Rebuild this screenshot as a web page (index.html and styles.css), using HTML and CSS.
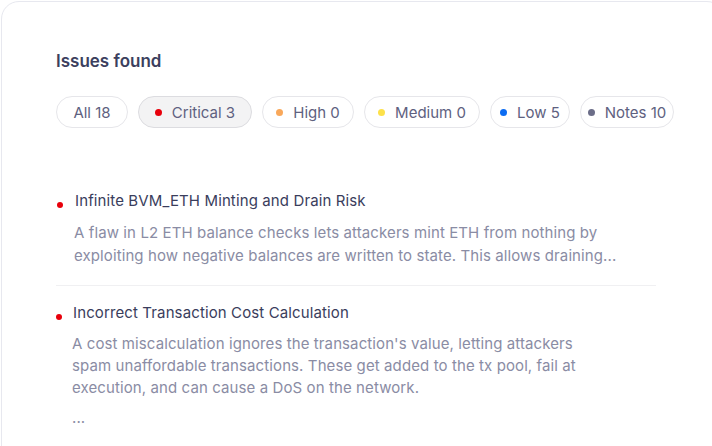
FILE: index.html
```html
<!DOCTYPE html>
<html lang="en">
<head>
<meta charset="utf-8">
<title>Issues found</title>
<link rel="stylesheet" href="styles.css">
</head>
<body>
<div class="card">
  <h2 class="title">Issues found</h2>
  <div class="filters">
    <button class="pill">All 18</button>
    <button class="pill active"><span class="dot critical"></span>Critical 3</button>
    <button class="pill"><span class="dot high"></span>High 0</button>
    <button class="pill"><span class="dot medium"></span>Medium 0</button>
    <button class="pill"><span class="dot low"></span>Low 5</button>
    <button class="pill"><span class="dot notes"></span>Notes 10</button>
  </div>
  <ul class="issues">
    <li class="issue">
      <div class="issue-head"><span class="bullet"></span><span class="issue-title">Infinite BVM_ETH Minting and Drain Risk</span></div>
      <p class="issue-desc">A flaw in L2 ETH balance checks lets attackers mint ETH from nothing by exploiting how negative balances are written to state. This allows draining...</p>
    </li>
    <li class="issue compact">
      <div class="issue-head"><span class="bullet"></span><span class="issue-title">Incorrect Transaction Cost Calculation</span></div>
      <p class="issue-desc">A cost miscalculation ignores the transaction's value, letting attackers spam unaffordable transactions. These get added to the tx pool, fail at execution, and can cause a DoS on the network.</p>
      <p class="issue-more">...</p>
    </li>
  </ul>
</div>
</body>
</html>
```
FILE: styles.css
```css
* { box-sizing: border-box; }
html, body { margin: 0; padding: 0; background: #ffffff; }
body {
  font-family: Inter, "Noto Sans", sans-serif;
  overflow: hidden;
  height: 446px;
}
.card {
  margin: 1px 0 0 1px;
  width: 724px;
  height: 520px;
  border: 1px solid #e7e8ef;
  border-radius: 18px;
  padding: 47px 0 0 54px;
  background: #fff;
}
.title {
  margin: 0;
  font-size: 17px;
  line-height: 24px;
  font-weight: 600;
  color: #3c3f5e;
}
.filters {
  display: grid;
  grid-template-columns: 72px 114px 92px 116px 80px 94px;
  gap: 10px;
  margin-top: 23px;
}
.pill {
  display: flex;
  align-items: center;
  justify-content: center;
  gap: 10px;
  height: 32px;
  padding: 0;
  border: 1px solid #e6e6ea;
  border-radius: 16px;
  background: #fff;
  font-family: inherit;
  font-size: 15px;
  color: #5e6180;
  white-space: nowrap;
}
.pill.active { background: #f3f3f4; border-color: #dcdce0; }
.dot { width: 7px; height: 7px; border-radius: 50%; flex: none; }
.critical { background: #e8000b; }
.high { background: #f9a85a; }
.medium { background: #fde14a; }
.low { background: #0b6cf2; }
.notes { background: #6b6d88; }
.issues {
  list-style: none;
  margin: 62px 0 0 0;
  padding: 0;
  width: 600px;
}
.issue { padding: 0 0 18px 0; }
.issue + .issue { border-top: 1px solid #f0f0f2; padding-top: 16px; }
.issue-head {
  display: flex;
  align-items: center;
  gap: 12px;
}
.bullet {
  width: 6px;
  height: 6px;
  border-radius: 50%;
  background: #e8000b;
  margin-top: 7px;
  margin-left: 1px;
  flex: none;
}
.issue-title {
  font-size: 15px;
  line-height: 22px;
  letter-spacing: 0.12px;
  color: #3a3d5c;
}
.issue-desc, .issue-more {
  margin: 9px 0 0 18px;
  max-width: 560px;
  font-size: 15px;
  line-height: 23px;
  letter-spacing: 0.1px;
  color: #8a8ca4;
}
.compact .issue-head { gap: 11px; }
.compact .bullet { margin-left: 0; }
.compact .issue-desc, .compact .issue-more {
  margin-left: 16px;
  max-width: 530px;
  line-height: 22px;
  margin-top: 9px;
}
.compact .issue-more { margin-top: 8px; }
```
